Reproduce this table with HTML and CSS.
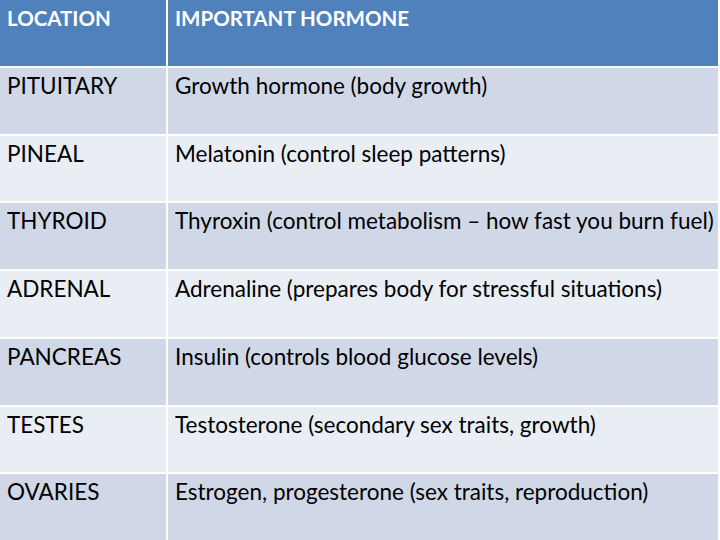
FILE: index.html
```html
<!DOCTYPE html>
<html>
<head>
<meta charset="utf-8">
<link rel="stylesheet" href="styles.css">
</head>
<body>
<div class="table">
  <div class="cell head">LOCATION</div>
  <div class="cell head">IMPORTANT HORMONE</div>
  <div class="cell dark">PITUITARY</div>
  <div class="cell dark">Growth hormone (body growth)</div>
  <div class="cell light">PINEAL</div>
  <div class="cell light">Melatonin (control sleep patterns)</div>
  <div class="cell dark">THYROID</div>
  <div class="cell dark">Thyroxin (control metabolism – how fast you burn fuel)</div>
  <div class="cell light">ADRENAL</div>
  <div class="cell light">Adrenaline (prepares body for stressful situations)</div>
  <div class="cell dark">PANCREAS</div>
  <div class="cell dark">Insulin (controls blood glucose levels)</div>
  <div class="cell light">TESTES</div>
  <div class="cell light">Testosterone (secondary sex traits, growth)</div>
  <div class="cell dark">OVARIES</div>
  <div class="cell dark">Estrogen, progesterone (sex traits, reproduction)</div>
</div>
</body>
</html>
```
FILE: styles.css
```css
html, body {
  margin: 0;
  padding: 0;
  background: #ffffff;
}
.table {
  width: 718px;
  height: 540px;
  display: grid;
  grid-template-columns: 166px 1fr;
  grid-template-rows: repeat(8, 1fr);
  gap: 2px;
  font-family: Lato, "Open Sans", sans-serif;
  font-size: 22.5px;
  color: #000;
}
.cell {
  padding: 5px 4px 0 7px;
  line-height: 26px;
  white-space: nowrap;
  overflow: hidden;
}
.head {
  background: #4f81bd;
  color: #fff;
  font-weight: bold;
  font-size: 20.5px;
  padding-top: 5px;
}
.dark { background: #d0d8e8; }
.light { background: #e9edf4; }
```
